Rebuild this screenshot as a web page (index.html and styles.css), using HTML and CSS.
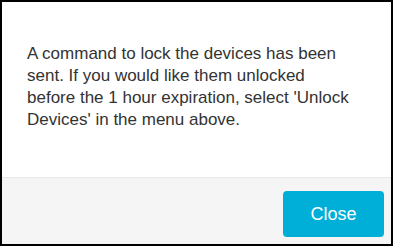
FILE: index.html
```html
<!DOCTYPE html>
<html>
<head>
<meta charset="utf-8">
<link rel="stylesheet" href="styles.css">
</head>
<body>
<div class="modal">
  <div class="modal-body">
    <p class="message">A command to lock the devices has been sent. If you would like them unlocked before the 1 hour expiration, select 'Unlock Devices' in the menu above.</p>
  </div>
  <div class="modal-footer">
    <button class="btn-close">Close</button>
  </div>
</div>
</body>
</html>
```
FILE: styles.css
```css
html, body {
  margin: 0;
  padding: 0;
  background: #ffffff;
}
.modal {
  box-sizing: border-box;
  width: 393px;
  height: 246px;
  border: 2px solid #000000;
  display: flex;
  flex-direction: column;
  font-family: "Liberation Sans", Arial, sans-serif;
}
.modal-body {
  height: 175px;
  box-sizing: border-box;
  padding: 41px 35px 0 25px;
}
.message {
  margin: 0;
  font-size: 17px;
  line-height: 22px;
  color: #333333;
}
.modal-footer {
  flex: 1;
  background: #f5f5f5;
  border-top: 1px solid #e8e8e8;
  display: flex;
  justify-content: flex-end;
  align-items: flex-start;
  padding: 13px 7px 0 0;
}
.btn-close {
  width: 101px;
  height: 46px;
  border: none;
  border-radius: 4px;
  background: #00afd8;
  color: #ffffff;
  font-family: "Liberation Sans", Arial, sans-serif;
  font-size: 18px;
  padding: 0;
}
```
